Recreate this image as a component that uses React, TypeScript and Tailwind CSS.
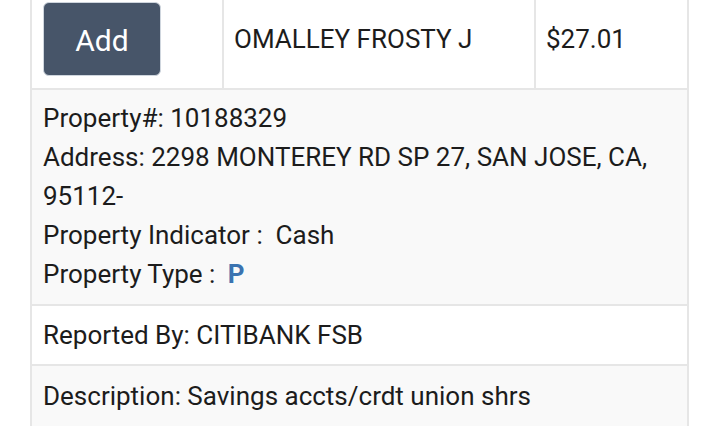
import React from "react";

export default function App() {
  return (
    <div className="w-[720px] h-[426px] overflow-hidden bg-white" style={{ fontFamily: "Roboto, 'Liberation Sans', sans-serif" }}>
      <div className="ml-[30px] w-[659px] -mt-[10px] border-x-2 border-[#e6e6e6] text-[#1c1c1c] text-[26px]">
        <div className="flex h-[100px] border-b-2 border-[#e6e6e6]">
          <div className="w-[190px] flex items-center pl-[11px]">
            <button className="w-[118px] h-[74px] rounded-[6px] bg-[#475569] border border-[#cfd6de] text-white text-[30px] leading-none flex items-center justify-center pt-[3px]">
              Add
            </button>
          </div>
          <div className="w-[312px] border-l-2 border-[#e6e6e6] flex items-center pl-[10px]">
            OMALLEY FROSTY J
          </div>
          <div className="flex-1 border-l-2 border-[#e6e6e6] flex items-center pl-[10px]">
            $27.01
          </div>
        </div>
        <div className="bg-[#f9f9f9] border-b-2 border-[#e6e6e6] pl-[11px] pr-[12px] pt-[9px] pb-[10px] leading-[39px]">
          <div>Property#: 10188329</div>
          <div>Address: 2298 MONTEREY RD SP 27, SAN JOSE, CA, 95112-</div>
          <div>Property Indicator :&nbsp; Cash</div>
          <div className="flex items-center">
            <span>Property Type :&nbsp;</span>
            <span className="ml-[6px] text-[#3b73b0] font-bold text-[26px]">P</span>
          </div>
        </div>
        <div className="bg-white border-b-2 border-[#e6e6e6] pl-[11px] h-[60px] flex items-center">
          Reported By: CITIBANK FSB
        </div>
        <div className="bg-[#f9f9f9] pl-[11px] h-[60px] flex items-center">
          Description: Savings accts/crdt union shrs
        </div>
      </div>
    </div>
  );
}
